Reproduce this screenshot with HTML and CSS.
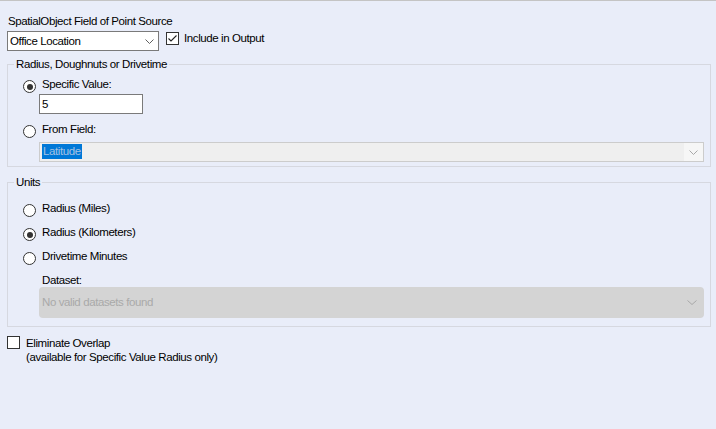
FILE: index.html
```html
<!DOCTYPE html>
<html>
<head>
<meta charset="utf-8">
<link rel="stylesheet" href="styles.css">
</head>
<body>
<div class="page">
  <div class="source">
    <div class="label">SpatialObject Field of Point Source</div>
    <div class="source-row">
      <div class="select">
        <span class="select-text">Office Location</span>
        <svg class="chev" width="9" height="5" viewBox="0 0 9 5"><path d="M0.5 0.5 L4.5 4.5 L8.5 0.5" fill="none" stroke="#606060" stroke-width="1"/></svg>
      </div>
      <div class="check">
        <span class="box"><svg width="11" height="11" viewBox="0 0 11 11"><path d="M1.5 5.5 L4 8 L9.5 2.5" fill="none" stroke="#222" stroke-width="1.1"/></svg></span>
        <span>Include in Output</span>
      </div>
    </div>
  </div>

  <fieldset class="group g1">
    <legend>Radius, Doughnuts or Drivetime</legend>
    <div class="radio-row"><span class="radio on"></span><span>Specific Value:</span></div>
    <div class="indent"><div class="textbox">5</div></div>
    <div class="radio-row r2"><span class="radio"></span><span>From Field:</span></div>
    <div class="indent">
      <div class="combo">
        <div class="combo-field"><span class="sel">Latitude</span></div>
        <div class="combo-btn"><svg width="9" height="5" viewBox="0 0 9 5"><path d="M0.5 0.5 L4.5 4.5 L8.5 0.5" fill="none" stroke="#a8a8a8" stroke-width="1"/></svg></div>
      </div>
    </div>
  </fieldset>

  <fieldset class="group g2">
    <legend>Units</legend>
    <div class="radio-row"><span class="radio"></span><span>Radius (Miles)</span></div>
    <div class="radio-row u"><span class="radio on"></span><span>Radius (Kilometers)</span></div>
    <div class="radio-row u"><span class="radio"></span><span>Drivetime Minutes</span></div>
    <div class="indent">
      <div class="ds-label">Dataset:</div>
      <div class="dataset">
        <span>No valid datasets found</span>
        <svg width="10" height="5" viewBox="0 0 10 5"><path d="M0.5 0.5 L5 4.5 L9.5 0.5" fill="none" stroke="#a8a8a8" stroke-width="1"/></svg>
      </div>
    </div>
  </fieldset>

  <div class="overlap">
    <span class="box empty"></span>
    <div class="overlap-text">
      <div>Eliminate Overlap</div>
      <div>(available for Specific Value Radius only)</div>
    </div>
  </div>
</div>
</body>
</html>
```

FILE: styles.css
```css
html, body {
  margin: 0;
  padding: 0;
}
body {
  background: #e9edf9;
  font-family: "Liberation Sans", Arial, sans-serif;
  font-size: 11.5px;
  letter-spacing: -0.4px;
  color: #000;
  width: 716px;
  height: 429px;
  overflow: hidden;
}
.page {
  border-top: 1px solid #c4c4c4;
  height: 428px;
  box-sizing: border-box;
}
.source {
  padding: 13px 0 0 7px;
}
.label {
  line-height: 15px;
  padding-left: 1px;
}
.source-row {
  display: flex;
  align-items: flex-start;
  margin-top: 2px;
}
.select {
  width: 152px;
  height: 20px;
  box-sizing: border-box;
  border: 1px solid #7a7a7a;
  background: #fff;
  display: flex;
  align-items: center;
  justify-content: space-between;
  padding: 0 4px 1px 2px;
}
.select-text {
  line-height: 16px;
}
.chev {
  margin-top: 1px;
}
.check {
  display: flex;
  align-items: flex-start;
  margin-left: 7px;
  line-height: 15px;
}
.box {
  width: 13px;
  height: 13px;
  box-sizing: border-box;
  border: 1px solid #333;
  background: #fff;
  display: inline-flex;
  align-items: center;
  justify-content: center;
  margin-top: 1px;
  margin-right: 5px;
  flex: none;
}
.box svg {
  display: block;
}
.group {
  margin: 0 5px 0 7px;
  padding: 0 6px 0 0;
  border: 1px solid #d6d8e0;
  min-width: 0;
}
.group legend {
  margin-left: 6px;
  padding: 0 2px;
  line-height: 15px;
}
.g1 {
  margin-top: 6px;
  padding-top: 5px;
  padding-bottom: 4px;
}
.g2 {
  margin-top: 8px;
  padding-top: 11px;
  padding-bottom: 8px;
}
.radio-row {
  display: flex;
  align-items: flex-start;
  line-height: 15px;
  padding-left: 15px;
}
.radio-row.r2 {
  margin-top: 8px;
}
.radio-row.u {
  margin-top: 8px;
}
.radio {
  width: 13px;
  height: 13px;
  box-sizing: border-box;
  border: 1px solid #333;
  border-radius: 50%;
  background: #fff;
  margin-top: 3px;
  margin-right: 6px;
  position: relative;
  flex: none;
}
.radio.on::after {
  content: "";
  position: absolute;
  left: 2.5px;
  top: 2.5px;
  width: 6px;
  height: 6px;
  border-radius: 50%;
  background: #333;
}
.indent {
  padding-left: 31px;
}
.textbox {
  margin-top: 1px;
  width: 104px;
  height: 20px;
  box-sizing: border-box;
  border: 1px solid #7a7a7a;
  background: #fff;
  padding: 1px 2px;
  line-height: 16px;
}
.combo {
  margin-top: 4px;
  height: 20px;
  box-sizing: border-box;
  border: 1px solid #cccccc;
  display: flex;
}
.combo-field {
  flex: 1;
  background: #efefef;
  padding: 1px 0 0 2px;
}
.sel {
  display: inline-block;
  background: #0078d7;
  color: #a6c2e2;
  line-height: 15px;
  padding: 0 1px;
}
.combo-btn {
  width: 19px;
  background: #f6f6f6;
  display: flex;
  align-items: center;
  justify-content: center;
}
.ds-label {
  margin-top: 8px;
  line-height: 14px;
  padding-left: 3px;
}
.dataset {
  margin-top: 0;
  height: 30px;
  border-radius: 4px;
  background: #d4d4d4;
  color: #a9a9a9;
  display: flex;
  align-items: center;
  justify-content: space-between;
  padding: 0 7px 1px 3px;
}
.overlap {
  display: flex;
  align-items: flex-start;
  margin: 9px 0 0 7px;
  line-height: 14px;
}
.overlap .box {
  margin-top: 0;
  margin-right: 6px;
}
```
